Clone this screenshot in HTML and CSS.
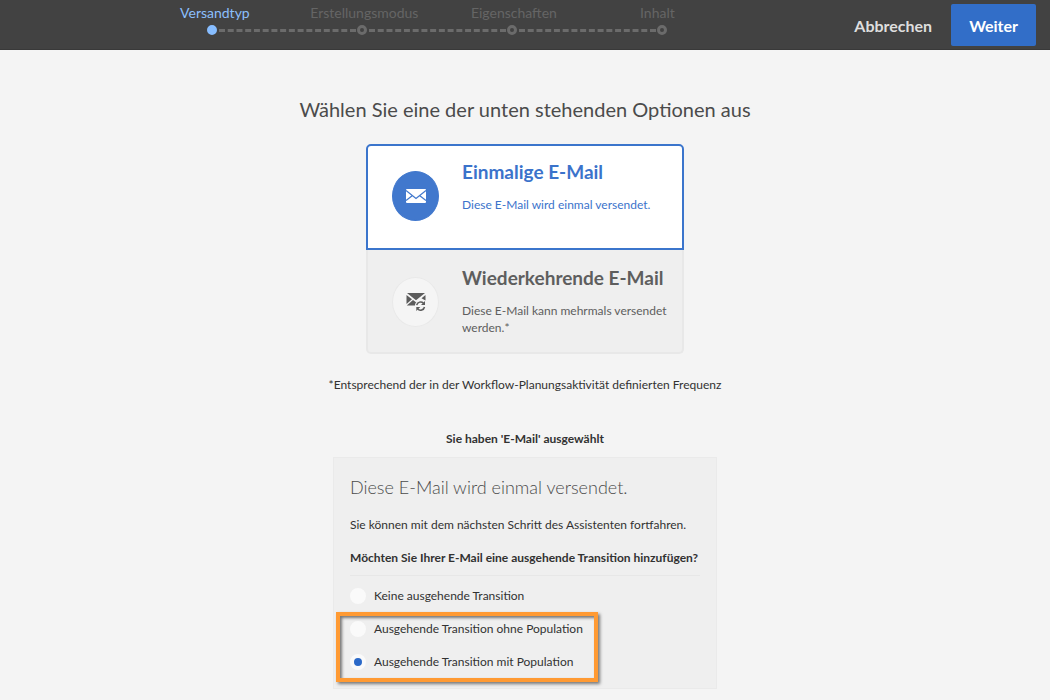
FILE: index.html
```html
<!DOCTYPE html>
<html lang="de">
<head>
<meta charset="utf-8">
<meta name="viewport" content="width=device-width, initial-scale=1">
<title>E-Mail – Versandtyp</title>
<link rel="stylesheet" href="styles.css">
</head>
<body>
<header class="topbar">
  <nav class="wizard" aria-label="Schritte">
    <ol class="steps">
      <li class="step current" aria-current="step">Versandtyp</li>
      <li class="step">Erstellungsmodus</li>
      <li class="step">Eigenschaften</li>
      <li class="step last">Inhalt</li>
    </ol>
    <div class="track" aria-hidden="true">
      <span class="dot active"></span><span class="dash"></span>
      <span class="dot"></span><span class="dash"></span>
      <span class="dot"></span><span class="dash"></span>
      <span class="dot"></span>
    </div>
  </nav>
  <div class="actions">
    <button type="button" class="btn">Abbrechen</button>
    <button type="button" class="btn primary">Weiter</button>
  </div>
</header>
<main class="content">
  <h1 class="title">Wählen Sie eine der unten stehenden Optionen aus</h1>
  <div class="cards">
    <button type="button" class="card selected" aria-pressed="true">
      <span class="badge">
        <svg width="20" height="14" viewBox="0 0 20 14" aria-hidden="true">
          <rect width="20" height="14" rx="1" fill="#fff"/>
          <path d="M0 1.500l10 8 10-8M0 11.500l6.500-5M20 11.500l-6.500-5" fill="none" stroke="#4178cd" stroke-width="1.300"/>
        </svg>
      </span>
      <span class="card-text">
        <span class="card-title">Einmalige E-Mail</span>
        <span class="card-desc">Diese E-Mail wird einmal versendet.</span>
      </span>
    </button>
    <button type="button" class="card" aria-pressed="false">
      <span class="badge">
        <svg width="20" height="18" viewBox="0 0 20 18" aria-hidden="true">
          <path d="M1 0h18l-9 7.200zM.5 2v9l5.500-4.800zM19.500 2v5.500l-4-2.200zM7 7l3 2.200 1.800-1.300C9.800 9 9 10.500 9 12.500H.8z" fill="#5c5c5c"/>
          <path d="M10.700 12.200a4 4 0 0 1 6.800-2M18.500 14a4 4 0 0 1-6.800 2" fill="none" stroke="#5c5c5c" stroke-width="1.500"/>
          <path d="M19 8v4h-4zM10.300 18v-4h4z" fill="#5c5c5c"/>
        </svg>
      </span>
      <span class="card-text">
        <span class="card-title">Wiederkehrende E-Mail</span>
        <span class="card-desc">Diese E-Mail kann mehrmals versendet werden.*</span>
      </span>
    </button>
  </div>
  <p class="note">*Entsprechend der in der Workflow-Planungsaktivität definierten Frequenz</p>
  <p class="chosen">Sie haben 'E-Mail' ausgewählt</p>
  <section class="panel">
    <h2 class="panel-title">Diese E-Mail wird einmal versendet.</h2>
    <p class="panel-text">Sie können mit dem nächsten Schritt des Assistenten fortfahren.</p>
    <fieldset class="options">
      <legend class="question">Möchten Sie Ihrer E-Mail eine ausgehende Transition hinzufügen?</legend>
      <label class="option"><input class="radio" type="radio" name="transition">Keine ausgehende Transition</label>
      <div class="highlight">
        <label class="option"><input class="radio" type="radio" name="transition">Ausgehende Transition ohne Population</label>
        <label class="option"><input class="radio" type="radio" name="transition" checked>Ausgehende Transition mit Population</label>
      </div>
    </fieldset>
  </section>
</main>
</body>
</html>
```
FILE: styles.css
```css
* { box-sizing: border-box; }
body {
  margin: 0;
  background: #f4f4f4;
  color: #323232;
  font-family: Lato, "Noto Sans", sans-serif;
  font-size: 12px;
  line-height: 17px;
}
h1, h2, p, ol, fieldset, legend { margin: 0; padding: 0; }
button { font: inherit; color: inherit; cursor: pointer; }

.topbar {
  display: flex;
  min-height: 50px;
  background: #424242;
  border-bottom: 1px solid #393939;
}
.wizard { flex: 1; display: flex; flex-direction: column; align-items: center; padding: 4px 0 0 38px; }
.steps { display: flex; width: 600px; list-style: none; }
.step {
  flex: 1;
  padding-left: 6px;
  text-align: center;
  font-size: 14px;
  line-height: 18px;
  color: #656565;
}
.step.current { color: #8bbffc; }
.step.last { padding: 0 8px 0 0; }
.track { display: flex; align-items: center; width: 460px; margin-top: 3px; }
.dot { width: 10px; height: 10px; border: 3px solid #6b6b6b; border-radius: 50%; }
.dot.active { border-color: #87bdff; background: #87bdff; }
.dash { flex: 1; margin: 0 1px 0 2px; border-top: 3px dashed #6b6b6b; }
.actions { display: flex; align-items: flex-start; gap: 1px; padding: 4px 14px 0 0; }
.btn {
  height: 42px;
  padding: 0 18px;
  border: 0;
  border-radius: 2px;
  background: none;
  color: #dedede;
  font-size: 16px;
  font-weight: 700;
}
.btn.primary { background: #326ec8; color: #fff; }

.content { display: flex; flex-direction: column; align-items: center; padding: 45px 16px 11px; }
.title { font-size: 20px; line-height: 28px; font-weight: 400; color: #4b4b4b; }
.cards { width: 100%; max-width: 318px; margin-top: 21px; }
.card {
  display: flex;
  align-items: flex-start;
  gap: 23px;
  width: 100%;
  min-height: 104px;
  padding: 16px 8px 16px 24px;
  border: 2px solid #e8e8e8;
  border-top: 0;
  border-radius: 0 0 5px 5px;
  background: #efefef;
  color: #5e5e5e;
  text-align: left;
}
.card.selected { border: 2px solid #3b75cc; border-radius: 5px 5px 0 0; background: #fff; color: #3b73cb; min-height: 106px; padding-top: 14px; }
.badge {
  flex: none;
  display: grid;
  place-items: center;
  width: 47px;
  height: 50px;
  margin-top: 11px;
  border: 1px solid #e9e9e9;
  border-radius: 50%;
  background: #f5f5f5;
}
.selected .badge { border-color: #4178cd; background: #4178cd; }
.card-text { display: flex; flex-direction: column; gap: 12px; }
.card-title { font-size: 19px; line-height: 24px; font-weight: 700; }
.note { margin-top: 22px; }
.chosen { margin-top: 37px; font-weight: 700; }
.panel { width: 100%; max-width: 384px; margin-top: 10px; padding: 15px 16px 10px; border: 1px solid #eaeaea; background: #efefef; }
.panel-title { font-size: 18px; line-height: 28px; font-weight: 300; color: #4b4b4b; }
.panel-text { margin-top: 15px; }
.options { min-width: 0; border: 0; }
.question { width: 100%; padding: 16px 0 9px; border-bottom: 1px solid #e7e7e7; font-weight: 700; white-space: nowrap; }
.option { display: flex; align-items: center; gap: 8px; margin-top: 3px; height: 33px; }
.highlight .option { margin: 0; }
.radio {
  appearance: none;
  width: 16px;
  height: 16px;
  margin: 0;
  border: 4px solid #fafafa;
  border-radius: 50%;
  background: #fafafa;
}
.radio:checked { background: #2b69c8; }
.highlight { position: relative; width: max-content; }
.highlight::after {
  content: "";
  position: absolute;
  inset: 0 -15px -4px -14px;
  border: 4px solid #ff9a33;
  box-shadow: 2px 2px 3px #777, inset 2px 2px 3px #777;
  pointer-events: none;
}
```
